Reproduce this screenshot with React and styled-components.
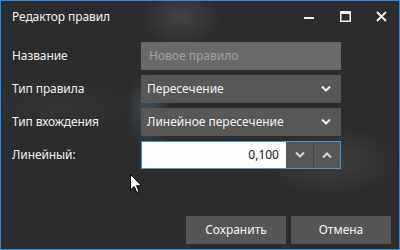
import React from 'react'
import styled, { createGlobalStyle } from 'styled-components'

const GlobalStyle = createGlobalStyle`
  html, body {
    margin: 0;
    padding: 0;
    background: #2b2b2b;
  }
  * {
    box-sizing: border-box;
  }
`;

const Window = styled.div`
  position: relative;
  width: 400px;
  height: 250px;
  border: 1px solid #2b8ce0;
  display: flex;
  flex-direction: column;
  font-family: "Noto Sans", "Open Sans", sans-serif;
  color: #f2f2f2;
  background:
    radial-gradient(ellipse 40px 30px at 180px 16px, rgba(90, 90, 90, 0.5), transparent),
    radial-gradient(ellipse 22px 40px at 148px 110px, rgba(90, 120, 150, 0.45), transparent),
    radial-gradient(ellipse 70px 35px at 330px 160px, rgba(80, 80, 80, 0.55), transparent),
    radial-gradient(ellipse 90px 30px at 60px 105px, rgba(60, 60, 60, 0.5), transparent),
    #2c2c2c;
  overflow: hidden;
`;

const TitleBar = styled.div`
  height: 34px;
  display: flex;
  align-items: center;
  padding-left: 11px;
`;

const Title = styled.div`
  flex: 1;
  font-size: 12px;
  letter-spacing: -0.1px;
  padding-bottom: 3px;
`;

const CaptionButton = styled.div`
  width: 36px;
  height: 34px;
  display: flex;
  align-items: center;
  justify-content: center;
  padding-bottom: 3px;
`;

const Form = styled.div`
  display: grid;
  grid-template-columns: 129px 200px;
  grid-auto-rows: 28px;
  row-gap: 5px;
  padding: 7px 0 0 11px;
`;

const Label = styled.div`
  display: flex;
  align-items: center;
  font-size: 12px;
  letter-spacing: -0.1px;
  color: #f0f0f0;
  padding-bottom: 1px;
`;

const TextBox = styled.div`
  display: flex;
  align-items: center;
  background: #6a6a6a;
  color: #a2a2a2;
  font-size: 12px;
  padding: 0 8px 1px;
`;

const Select = styled.div`
  display: flex;
  align-items: center;
  justify-content: space-between;
  background: #575757;
  font-size: 12px;
  color: #f4f4f4;
  padding: 0 10px 1px 6px;
`;

const Spinner = styled.div`
  display: flex;
  border: 1px solid #3d9be6;
  background: #575757;
`;

const NumberField = styled.div`
  flex: 1;
  background: #ffffff;
  color: #111111;
  font-size: 12px;
  display: flex;
  align-items: center;
  justify-content: flex-end;
  padding: 0 7px 1px 0;
`;

const SpinButton = styled.div`
  width: 27px;
  display: flex;
  align-items: center;
  justify-content: center;
  border-left: ${p => (p.$divider ? '1px solid #474747' : 'none')};
`;

const Footer = styled.div`
  margin-top: auto;
  display: flex;
  justify-content: flex-end;
  gap: 5px;
  padding: 0 8px 5px 0;
`;

const Button = styled.div`
  width: 100px;
  height: 28px;
  background: #565656;
  color: #f4f4f4;
  font-size: 12px;
  display: flex;
  align-items: center;
  justify-content: center;
  padding-bottom: 1px;
`;

const Cursor = styled.svg`
  position: absolute;
  left: 129px;
  top: 173px;
`;

function Chevron({ up, color = '#f0f0f0' }) {
  return (
    <svg width="10" height="6" viewBox="0 0 10 6">
      <path
        d={up ? 'M1 5.5 L5 1.5 L9 5.5' : 'M1 0.5 L5 4.5 L9 0.5'}
        fill="none"
        stroke={color}
        strokeWidth="2"
      />
    </svg>
  );
}

export default function App() {
  return (
    <>
      <GlobalStyle />
      <Window>
        <TitleBar>
          <Title>Редактор правил</Title>
          <CaptionButton>
            <svg width="10" height="10" viewBox="0 0 10 10">
              <rect x="0" y="5" width="10" height="2" fill="#f0f0f0" />
            </svg>
          </CaptionButton>
          <CaptionButton>
            <svg width="11" height="11" viewBox="0 0 11 11">
              <rect x="0.75" y="0.75" width="9.5" height="9.5" fill="none" stroke="#f0f0f0" strokeWidth="1.5" />
              <rect x="0" y="0" width="11" height="3" fill="#f0f0f0" />
            </svg>
          </CaptionButton>
          <CaptionButton>
            <svg width="11" height="11" viewBox="0 0 11 11">
              <path d="M1 1 L10 10 M10 1 L1 10" stroke="#f0f0f0" strokeWidth="2" />
            </svg>
          </CaptionButton>
        </TitleBar>

        <Form>
          <Label>Название</Label>
          <TextBox>Новое правило</TextBox>

          <Label>Тип правила</Label>
          <Select>
            Пересечение
            <Chevron />
          </Select>

          <Label>Тип вхождения</Label>
          <Select>
            Линейное пересечение
            <Chevron />
          </Select>

          <Label>Линейный:</Label>
          <Spinner>
            <NumberField>0,100</NumberField>
            <SpinButton>
              <Chevron color="#d8d8d8" />
            </SpinButton>
            <SpinButton $divider>
              <Chevron up color="#d8d8d8" />
            </SpinButton>
          </Spinner>
        </Form>

        <Footer>
          <Button>Сохранить</Button>
          <Button>Отмена</Button>
        </Footer>

        <Cursor width="13" height="20" viewBox="0 0 13 20">
          <path
            d="M0.5 0.5 L0.5 16 L4.2 12.5 L6.8 18.5 L9 17.5 L6.5 11.7 L11.5 11.7 Z"
            fill="#ffffff"
            stroke="#000000"
            strokeWidth="1"
          />
        </Cursor>
      </Window>
    </>
  );
}
